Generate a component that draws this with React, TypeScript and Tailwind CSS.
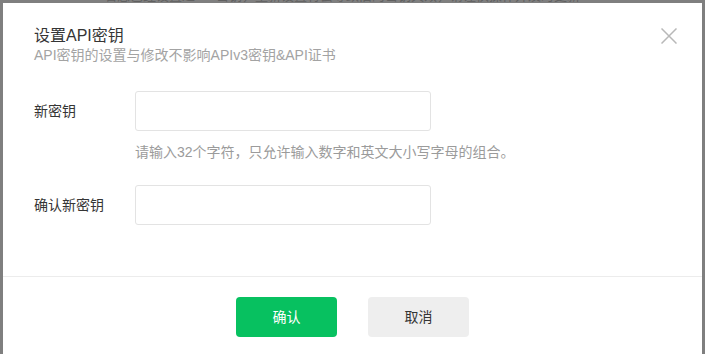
import React from "react";

export default function App() {
  const font = { fontFamily: '"Liberation Sans", "Noto Sans CJK SC", Arial, sans-serif' };
  return (
    <div className="w-[705px] h-[354px] overflow-hidden bg-[#7f7f7f] flex flex-col" style={font}>
      <div className="h-[3px] overflow-hidden pl-[104px] flex items-end">
        <div className="text-[13px] leading-[14px] text-[#606060] whitespace-nowrap">
          若您已经设置过API密钥，重新设置将会导致旧的密钥失效，请谨慎操作并及时更新
        </div>
      </div>
      <div className="mx-[3px] flex-1 bg-white flex flex-col">
        <div className="flex justify-between pl-[31px] pr-[25px] pt-[22px]">
          <div className="flex flex-col">
            <div className="text-[16px] leading-[22px] text-[#353535]">设置API密钥</div>
            <div className="text-[14px] leading-[18px] text-[#a3a3a3] -mt-[1px]">
              API密钥的设置与修改不影响APIv3密钥&amp;API证书
            </div>
          </div>
          <svg width="16" height="16" viewBox="0 0 16 16" className="mt-[3px]">
            <path d="M0.5 0.5 L15.5 15.5 M15.5 0.5 L0.5 15.5" stroke="#b8b8b8" strokeWidth="1.5" fill="none" />
          </svg>
        </div>
        <div className="pl-[31px] pt-[27px] flex flex-col">
          <div className="flex items-start">
            <div className="w-[101px] text-[14px] leading-[40px] text-[#353535]">新密钥</div>
            <div className="flex flex-col">
              <div className="w-[296px] h-[40px] border border-[#e3e3e3] rounded-[3px]" />
              <div className="mt-[12px] text-[14px] leading-[18px] text-[#9b9b9b]">
                请输入32个字符，只允许输入数字和英文大小写字母的组合。
              </div>
            </div>
          </div>
          <div className="flex items-start mt-[24px]">
            <div className="w-[101px] text-[14px] leading-[40px] text-[#353535]">确认新密钥</div>
            <div className="w-[296px] h-[40px] border border-[#e3e3e3] rounded-[3px]" />
          </div>
        </div>
        <div className="mt-[51px] h-px bg-[#ececec]" />
        <div className="flex justify-center gap-[31px] pt-[20px]">
          <div className="w-[101px] h-[40px] rounded-[4px] bg-[#07c160] text-white text-[14px] flex items-center justify-center">
            确认
          </div>
          <div className="w-[101px] h-[40px] rounded-[4px] bg-[#eeeeee] text-[#353535] text-[14px] flex items-center justify-center">
            取消
          </div>
        </div>
      </div>
    </div>
  );
}
